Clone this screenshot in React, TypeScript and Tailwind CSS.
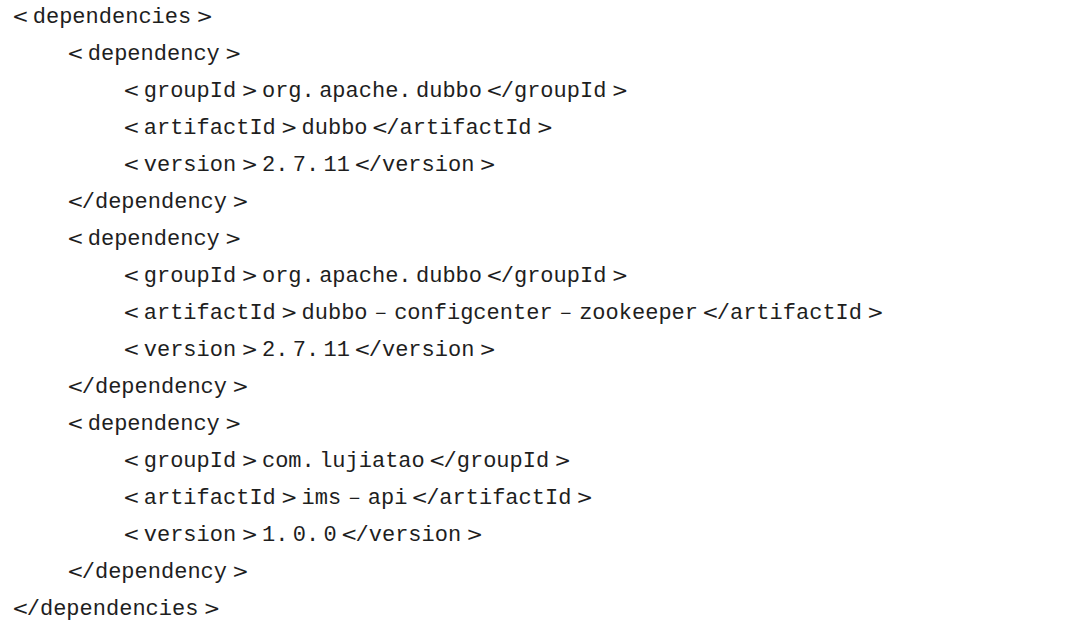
const mono = { fontFamily: '"Liberation Mono", "Courier New", monospace' };

type Line = { indent: number; open?: string; text?: string; close?: string };

const lines: Line[] = [
  { indent: 0, open: 'dependencies' },
  { indent: 1, open: 'dependency' },
  { indent: 2, open: 'groupId', text: 'org.\u2009apache.\u2009dubbo', close: 'groupId' },
  { indent: 2, open: 'artifactId', text: 'dubbo', close: 'artifactId' },
  { indent: 2, open: 'version', text: '2.\u20097.\u200911', close: 'version' },
  { indent: 1, close: 'dependency' },
  { indent: 1, open: 'dependency' },
  { indent: 2, open: 'groupId', text: 'org.\u2009apache.\u2009dubbo', close: 'groupId' },
  { indent: 2, open: 'artifactId', text: 'dubbo-configcenter-zookeeper', close: 'artifactId' },
  { indent: 2, open: 'version', text: '2.\u20097.\u200911', close: 'version' },
  { indent: 1, close: 'dependency' },
  { indent: 1, open: 'dependency' },
  { indent: 2, open: 'groupId', text: 'com.\u2009lujiatao', close: 'groupId' },
  { indent: 2, open: 'artifactId', text: 'ims-api', close: 'artifactId' },
  { indent: 2, open: 'version', text: '1.\u20090.\u20090', close: 'version' },
  { indent: 1, close: 'dependency' },
  { indent: 0, close: 'dependencies' },
];

const sym = "font-['DejaVu_Sans'] text-[20px]";

// the hyphens are typeset as spaced minus signs in the original
function Value({ text }: { text: string }) {
  const parts = text.split('-');
  return (
    <>
      {parts.map((p, i) => (
        <span key={i}>
          {i > 0 && (
            <span className="font-['DejaVu_Sans'] text-[15px] leading-none align-middle mx-[7px]">
              {'\u2212'}
            </span>
          )}
          {p}
        </span>
      ))}
    </>
  );
}

function Tag({ name, closing, after }: { name: string; closing?: boolean; after?: boolean }) {
  return (
    <>
      <span className={`${sym} ${closing ? 'mr-[-2px]' : 'mr-[4px]'} ${after ? 'ml-[4px]' : ''}`}>
        &lt;
      </span>
      {closing && '/'}
      {name}
      <span className={`${sym} ml-[5px] mr-[4px]`}>&gt;</span>
    </>
  );
}

export default function App() {
  return (
    <div className="w-[1080px] h-[621px] bg-white text-[#1e1e1e] overflow-hidden">
      <div className="-mt-[2px] pl-[12px] text-[22px] leading-[37px] whitespace-pre" style={mono}>
        {lines.map((l, i) => (
          <div
            key={i}
            className={`h-[37px] ${
              l.indent === 0 ? '' : l.indent === 1 ? 'pl-[55px]' : 'pl-[111px]'
            }`}
          >
            {l.open && <Tag name={l.open} />}
            {l.text && <Value text={l.text} />}
            {l.close && <Tag name={l.close} closing after={!!l.text} />}
          </div>
        ))}
      </div>
    </div>
  );
}
